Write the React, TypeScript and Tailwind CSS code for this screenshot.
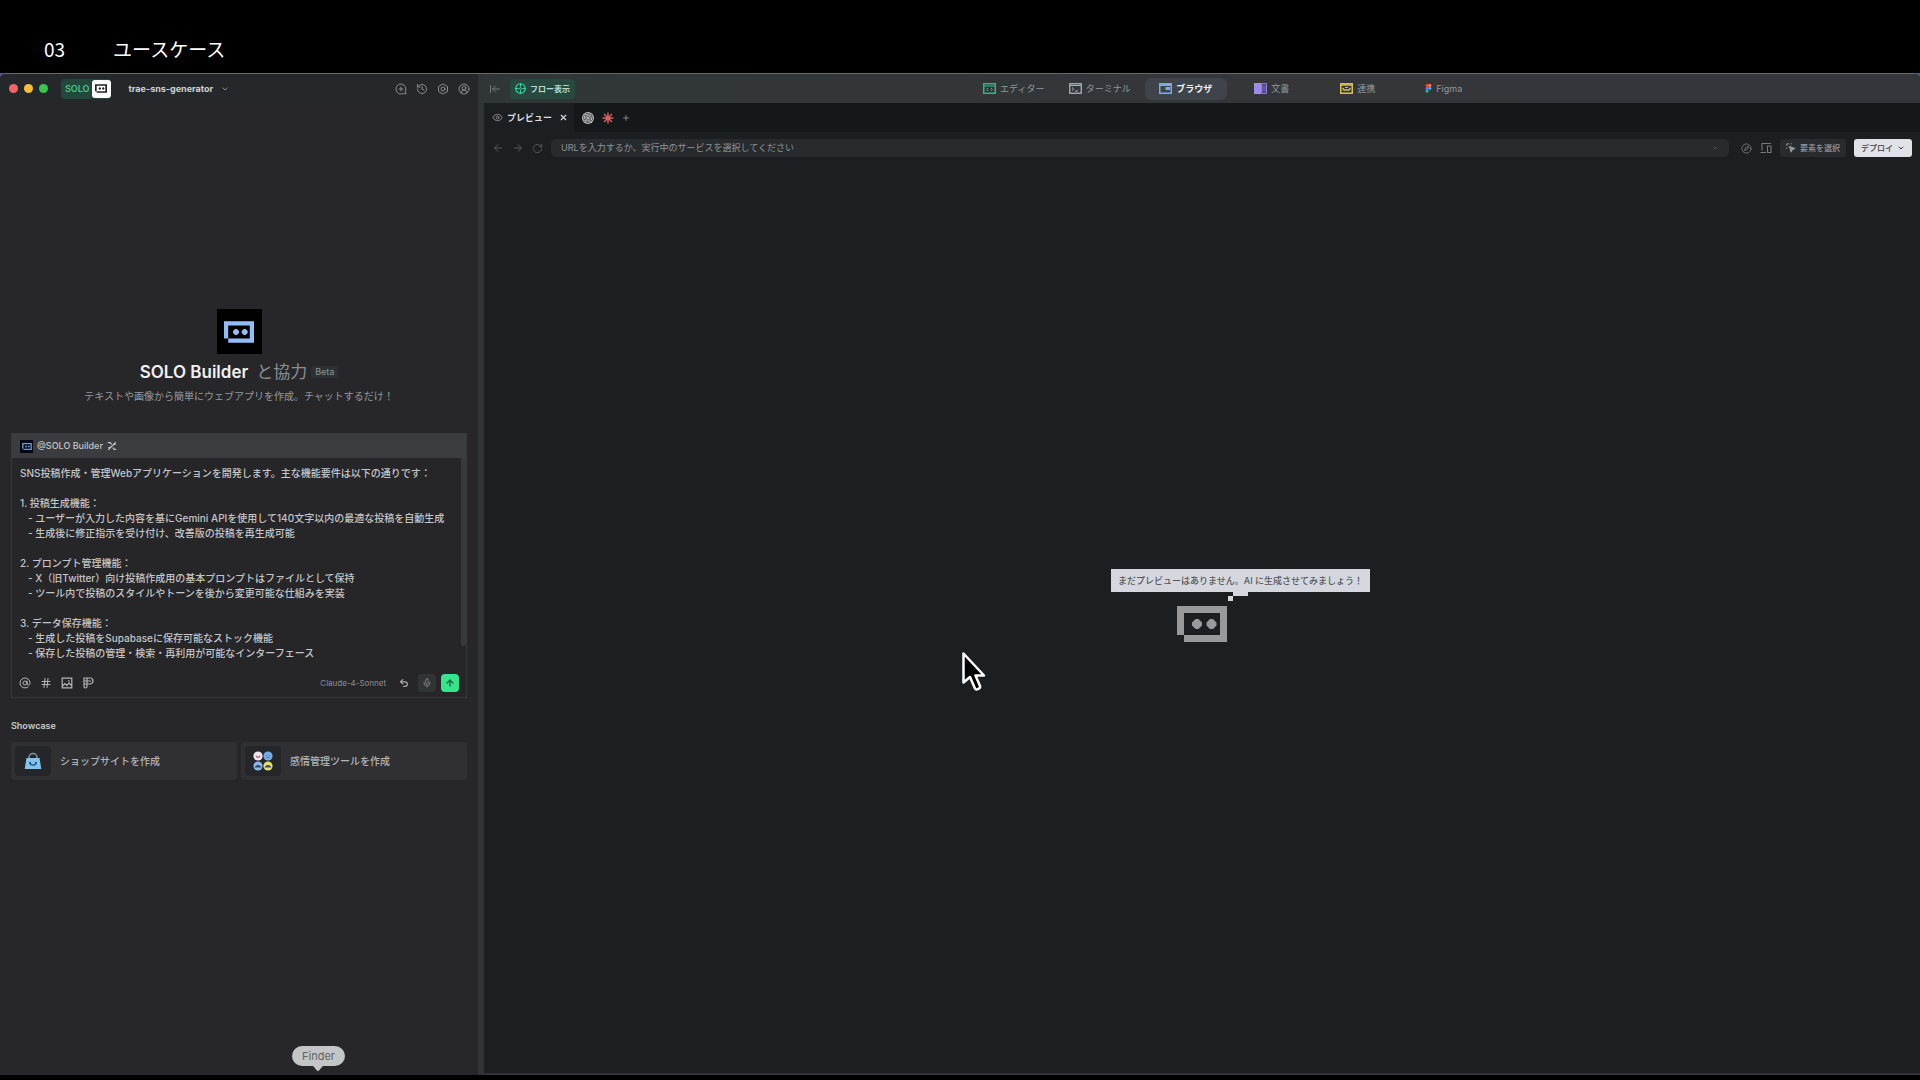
import { useState, type ReactNode } from "react";
import {
  ArrowLeft,
  ArrowLeftToLine,
  ArrowRight,
  ArrowUp,
  AtSign,
  Bolt,
  ChevronDown,
  CircleUserRound,
  Compass,
  Eye,
  Hash,
  History,
  MessageCirclePlus,
  Mic,
  Plus,
  RotateCw,
  Undo2,
  X,
} from "lucide-react";
import { SiOpenai } from "react-icons/si";

const initialPrompt = `SNS投稿作成・管理Webアプリケーションを開発します。主な機能要件は以下の通りです：

1. 投稿生成機能：
   - ユーザーが入力した内容を基にGemini APIを使用して140文字以内の最適な投稿を自動生成
   - 生成後に修正指示を受け付け、改善版の投稿を再生成可能

2. プロンプト管理機能：
   - X（旧Twitter）向け投稿作成用の基本プロンプトはファイルとして保持
   - ツール内で投稿のスタイルやトーンを後から変更可能な仕組みを実装

3. データ保存機能：
   - 生成した投稿をSupabaseに保存可能なストック機能
   - 保存した投稿の管理・検索・再利用が可能なインターフェース`;

// Pixel-style robot face used for the brand mark and the empty state
function RobotMark({ className }: { className?: string }) {
  return (
    <svg viewBox="0 0 50 36" className={className} fill="currentColor" aria-hidden="true">
      <path fillRule="evenodd" d="M0 0H50V36H7V29H0ZM7 7V29H43V7Z" />
      <path d="M18.500 13h3l3.500 3.500v3L21.500 23h-3L15 19.500v-3zM33 13h3l3.500 3.500v3L36 23h-3l-3.500-3.500v-3z" />
    </svg>
  );
}

function EditorIcon() {
  return (
    <svg viewBox="0 0 13 11" className="h-[11px] w-[13px] text-[#2fbf8f]" fill="none" stroke="currentColor" aria-hidden="true">
      <rect x="0.750" y="0.750" width="11.500" height="9.500" strokeWidth="1.400" />
      <path d="M1 3h11" strokeWidth="1.200" />
      <path d="M5 5L3.800 6.500 5 8M8 5l1.200 1.500L8 8" />
    </svg>
  );
}

function TerminalIcon() {
  return (
    <svg viewBox="0 0 13 11" className="h-[11px] w-[13px] text-[#a9b3ba]" fill="none" stroke="currentColor" aria-hidden="true">
      <rect x="0.750" y="0.750" width="11.500" height="9.500" strokeWidth="1.300" />
      <path d="M1 2.500h11M3 4.500l1.700 1.500L3 7.500M6 8h3" />
    </svg>
  );
}

function BrowserIcon() {
  return (
    <svg viewBox="0 0 13 11" className="h-[11px] w-[13px] text-[#7fa8e8]" fill="none" stroke="currentColor" aria-hidden="true">
      <rect x="0.750" y="0.750" width="11.500" height="9.500" strokeWidth="1.500" />
      <path d="M1 2h11" strokeWidth="2" />
      <path d="M6.500 4h4.500v3H6.500z" fill="currentColor" stroke="none" />
    </svg>
  );
}

function DocIcon() {
  return (
    <svg viewBox="0 0 13 11" className="h-[11px] w-[13px]" aria-hidden="true">
      <path d="M0 0h7v11H0z" fill="#9d8be6" />
      <path d="M7.500 0.500h5v10h-5z" fill="#4c4580" stroke="#8d7dd6" />
      <path d="M9 2.500v6M11 2.500v6" stroke="#7a6dc0" />
    </svg>
  );
}

function IntegrationIcon() {
  return (
    <svg viewBox="0 0 13 11" className="h-[11px] w-[13px] text-[#d4c350]" fill="none" stroke="currentColor" aria-hidden="true">
      <rect x="0.750" y="0.750" width="11.500" height="9.500" strokeWidth="1.500" />
      <path d="M1 2h11" strokeWidth="1.500" />
      <path d="M2.500 5l1.500 2h5l1.500-2" strokeWidth="1.400" />
      <path d="M5 4.500h3" />
    </svg>
  );
}

function FigmaIcon() {
  return (
    <svg viewBox="0 0 8 11" className="h-[9px] w-[7px]" aria-hidden="true">
      <path d="M4 0H2.200a1.800 1.800 0 000 3.600H4z" fill="#f24e1e" />
      <path d="M4 0h1.800a1.800 1.800 0 010 3.600H4z" fill="#ff7262" />
      <path d="M4 3.600H2.200a1.800 1.800 0 000 3.600H4z" fill="#a259ff" />
      <circle cx="5.800" cy="5.400" r="1.800" fill="#1abcfe" />
      <path d="M4 7.200H2.200A1.800 1.800 0 104 9z" fill="#0acf83" />
    </svg>
  );
}

function FigmaOutlineIcon() {
  return (
    <svg viewBox="0 0 12 12" className="size-3" fill="none" stroke="currentColor" strokeWidth="1.200" aria-hidden="true">
      <path d="M2 1h6a2 2 0 010 6H2zM2 4h7M5 1v8.500a1.500 1.500 0 01-3 0V7" />
    </svg>
  );
}

function PictureIcon() {
  return (
    <svg viewBox="0 0 12 12" className="size-3" fill="none" stroke="currentColor" strokeWidth="1.200" aria-hidden="true">
      <path d="M1.200 1.200h9.600v9.600H1.200zM1.500 9l2.500-2.500 2 2 2-2.500 2.500 2.500M7 3.800h1.500" />
    </svg>
  );
}

function DevicesIcon() {
  return (
    <svg viewBox="0 0 12 12" className="size-3" fill="none" stroke="currentColor" strokeWidth="1.100" aria-hidden="true">
      <path d="M2 8.500V1.500h9M0.500 10.500H6M7.500 4h3.500v6.500H7.500z" />
    </svg>
  );
}

function PickIcon() {
  return (
    <svg viewBox="0 0 12 12" className="size-[10px]" fill="none" stroke="currentColor" strokeWidth="1.200" aria-hidden="true">
      <path d="M1 3.500V1h2.500M5.500 1H7M1 5.500V7" />
      <path d="M4 4l2.200 7 1.400-3 3.400-1.400z" fill="currentColor" />
    </svg>
  );
}

function ToolsIcon() {
  return (
    <svg viewBox="0 0 12 12" className="size-[10px]" fill="none" stroke="currentColor" strokeWidth="1.400" aria-hidden="true">
      <path d="M1.500 10.500l9-9M1 2h3l1.500 2M7 8l1.500 2H11" />
      <path d="M8.500 4.500l2-1M1.500 8.500l2-1" />
    </svg>
  );
}

function FlowIcon() {
  return (
    <svg viewBox="0 0 12 12" className="size-[11px] text-[#3ad6a0]" fill="none" stroke="currentColor" aria-hidden="true">
      <circle cx="6" cy="6" r="5.200" strokeWidth="1.200" />
      <path d="M6 0v4M6 8v4M0 6h4M8 6h4" strokeWidth="1.200" />
      <circle cx="6" cy="6" r="1" />
    </svg>
  );
}

function BurstIcon() {
  return (
    <svg viewBox="0 0 12 12" className="size-3 text-[#d4605c]" stroke="currentColor" strokeWidth="1.400" aria-hidden="true">
      <path d="M6 0.500v11M0.500 6h11M2 2l8 8M10 2l-8 8" />
      <circle cx="6" cy="6" r="2.600" fill="currentColor" stroke="none" />
    </svg>
  );
}

function BagIcon() {
  return (
    <svg viewBox="0 0 18 18" className="size-[18px]" aria-hidden="true">
      <path d="M5 8V5.500a4 4 0 018 0V8" fill="none" stroke="#7d98a8" strokeWidth="1.500" />
      <path d="M2.500 6h13l1.800 11H0.700z" fill="#83c3ee" />
      <path d="M6 10.500c0 3.500 6 3.500 6 0" fill="none" stroke="#1c4a78" strokeWidth="1.300" />
      <path d="M5 10.500h2M11 10.500h2" stroke="#1c4a78" />
    </svg>
  );
}

function MoodIcon() {
  return (
    <svg viewBox="0 0 20 20" className="size-5" aria-hidden="true">
      <circle cx="5" cy="5" r="4.600" fill="#f0e9f0" />
      <circle cx="15" cy="5" r="4.600" fill="#79a9ea" />
      <circle cx="5" cy="15" r="4.600" fill="#8ab6f0" />
      <circle cx="15" cy="15" r="4.600" fill="#e6e06a" />
      <g fill="none" stroke="#35456b" strokeWidth="1.100">
        <path d="M3 4.500c.5 2.500 3.500 2.500 4 0" stroke="#a04a5c" />
        <path d="M13 4.500h1M16 4.500h1M13.500 6.500h3" stroke="#4c78b8" />
        <path d="M2.500 16c1-2 4-2 5 0z" fill="#27406f" />
        <path d="M12.500 16c1-2 4-2 5 0z" fill="#5c5a24" />
      </g>
    </svg>
  );
}

const tabs: { label: string; icon: ReactNode }[] = [
  { label: "エディター", icon: <EditorIcon /> },
  { label: "ターミナル", icon: <TerminalIcon /> },
  { label: "ブラウザ", icon: <BrowserIcon /> },
  { label: "文書", icon: <DocIcon /> },
  { label: "連携", icon: <IntegrationIcon /> },
  { label: "Figma", icon: <FigmaIcon /> },
];

const showcases = [
  { label: "ショップサイトを作成", icon: <BagIcon /> },
  { label: "感情管理ツールを作成", icon: <MoodIcon /> },
];

function IconButton({ label, children }: { label: string; children: ReactNode }) {
  return (
    <button type="button" aria-label={label} className="flex shrink-0 items-center justify-center">
      {children}
    </button>
  );
}

function TitleBar() {
  return (
    <header className="flex h-[29px] items-center bg-[#25282a] px-2 text-[#8b8e91]">
      <div className="flex gap-[6px] pl-px">
        <span className="size-[9px] rounded-full bg-[#f4636a]" />
        <span className="size-[9px] rounded-full bg-[#f6bd3b]" />
        <span className="size-[9px] rounded-full bg-[#36c84b]" />
      </div>
      <button type="button" aria-label="SOLO" className="ml-[13px] flex h-5 items-center rounded-sm bg-[#23483b] pl-1 text-[9px] font-semibold text-[#4cc489]">
        SOLO
        <span className="ml-[2px] flex h-[18px] w-[19px] items-center justify-center rounded-[3px] bg-white text-[#202224]">
          <RobotMark className="h-[9px] w-3" />
        </span>
      </button>
      <button type="button" className="ml-[18px] flex items-center gap-2 text-[9px] font-bold text-[#cfd1d2]">
        trae-sns-generator
        <ChevronDown className="size-2 text-[#8b8e91]" strokeWidth={3} />
      </button>
      <div className="ml-auto flex items-center gap-[9px]">
        <IconButton label="New chat"><MessageCirclePlus className="size-3 -scale-x-100" /></IconButton>
        <IconButton label="History"><History className="size-3" /></IconButton>
        <IconButton label="Settings"><Bolt className="size-3" /></IconButton>
        <IconButton label="Account"><CircleUserRound className="size-3" /></IconButton>
      </div>
    </header>
  );
}

function PromptCard() {
  const [prompt, setPrompt] = useState(initialPrompt);

  return (
    <div className="border border-[#38393c] bg-[#262629] text-[#c4c5c7]">
      <div className="flex h-6 items-center gap-1 bg-[#3a3c3f] px-2 text-[9px] font-medium">
        <span className="flex size-[13px] items-center justify-center bg-[#04060d] text-[#6f97cc]">
          <RobotMark className="h-[7px] w-[10px]" />
        </span>
        @SOLO Builder
        <ToolsIcon />
      </div>
      <div className="flex">
        <textarea
          aria-label="Prompt"
          rows={13}
          value={prompt}
          onChange={(e) => setPrompt(e.target.value)}
          className="mt-2 block min-w-0 flex-1 resize-none overflow-hidden pl-2 text-[10px] leading-[15px] font-medium outline-none"
        />
        <div className="h-[188px] w-[5px] rounded-b bg-[#38393c]" />
      </div>
      <div className="flex h-9 items-center gap-[9px] px-[7px] pt-2 text-[#b4b5b7]">
        <IconButton label="Mention"><AtSign className="size-3" /></IconButton>
        <IconButton label="Context"><Hash className="size-3" /></IconButton>
        <IconButton label="Image"><PictureIcon /></IconButton>
        <IconButton label="Figma"><FigmaOutlineIcon /></IconButton>
        <button type="button" className="ml-auto text-[8px] text-[#8d8e91]">Claude-4-Sonnet</button>
        <IconButton label="Undo"><Undo2 className="ml-1 size-[10px] text-[#a5a7a9]" strokeWidth={3} /></IconButton>
        <IconButton label="Voice">
          <span className="flex size-[18px] items-center justify-center rounded-sm bg-[#323335]">
            <Mic className="size-[10px] text-[#85878a]" />
          </span>
        </IconButton>
        <button type="button" aria-label="Send" className="-ml-1 flex size-[18px] items-center justify-center rounded-sm bg-[#36e58b] text-[#12613a]">
          <ArrowUp className="size-[10px]" strokeWidth={3} />
        </button>
      </div>
    </div>
  );
}

function ChatPanel() {
  return (
    <aside className="relative flex w-[24.9%] min-w-[400px] flex-col bg-[#27272a]">
      <TitleBar />
      <div className="flex-1 px-[11px] pt-[206px]">
        <div className="flex flex-col items-center pb-[29px]">
          <div className="flex h-[45px] w-[45px] items-center justify-center bg-black text-[#94bdf7]">
            <RobotMark className="h-[22px] w-[30px]" />
          </div>
          <h1 className="mt-[6px] flex items-center text-[17px] leading-6 font-semibold text-[#f0f0f1]">
            SOLO Builder
            <span className="ml-2 font-normal text-[#8d8e91]">と協力</span>
            <span className="ml-1 rounded-sm bg-[#2c3234] px-1 text-[9px] leading-3 font-normal text-[#8d9295]">Beta</span>
          </h1>
          <p className="mt-1 text-[10px] leading-4 text-[#97989b]">
            テキストや画像から簡単にウェブアプリを作成。チャットするだけ！
          </p>
        </div>
        <PromptCard />
        <h2 className="mt-5 text-[9px] leading-4 font-semibold text-[#c9cacb]">Showcase</h2>
        <div className="mt-2 grid grid-cols-2 gap-1">
          {showcases.map((item) => (
            <button
              key={item.label}
              type="button"
              className="flex h-[38px] items-center rounded-sm bg-[#303033] p-1 text-[10px] font-medium text-[#b3b4b6]"
            >
              <span className="mr-[9px] flex h-full w-9 items-center justify-center rounded-sm bg-[#252629]">{item.icon}</span>
              {item.label}
            </button>
          ))}
        </div>
      </div>
      <div role="tooltip" className="absolute bottom-1 left-[292px] flex flex-col items-center">
        <span className="rounded-full bg-[#c4c5c6] px-[10px] text-[11px] leading-5 text-[#626365]">Finder</span>
        <svg viewBox="0 0 14 6" className="-mt-px h-[6px] w-[14px] fill-[#c4c5c6]" aria-hidden="true">
          <path d="M0 0h14c-3 0-5 6-7 6S3 0 0 0z" />
        </svg>
      </div>
    </aside>
  );
}

function WorkspaceBar() {
  const [active, setActive] = useState("ブラウザ");

  return (
    <nav className="flex h-[29px] items-center bg-gradient-to-r from-[#303637] via-[#34363a] to-[#34363c] text-[9px]">
      <div className="flex flex-[10] items-center gap-[9px] pl-[5px]">
        <IconButton label="Collapse"><ArrowLeftToLine className="size-3 text-[#74797b]" /></IconButton>
        <button type="button" className="flex h-5 items-center gap-1 rounded-sm bg-[#27493f] px-[5px] text-[8px] font-semibold text-[#b9dccd]">
          <FlowIcon />
          フロー表示
        </button>
      </div>
      <div className="flex gap-1">
        {tabs.map((tab) => (
          <button
            key={tab.label}
            type="button"
            onClick={() => setActive(tab.label)}
            className={`flex h-[22px] w-[82px] items-center justify-center gap-1 rounded-md ${
              tab.label === active ? "bg-[#3f444a] font-bold text-[#f0f1f3]" : "text-[#95989b]"
            }`}
          >
            {tab.icon}
            {tab.label}
          </button>
        ))}
      </div>
      <div className="flex-[9]" />
    </nav>
  );
}

function BrowserToolbar() {
  return (
    <div className="flex h-8 items-center px-2 text-[#75797c]">
      <div className="flex gap-2 text-[#575b5e]">
        <IconButton label="Back"><ArrowLeft className="size-3" /></IconButton>
        <IconButton label="Forward"><ArrowRight className="size-3" /></IconButton>
        <IconButton label="Reload"><RotateCw className="size-[11px]" /></IconButton>
      </div>
      <div className="ml-2 flex h-[18px] flex-1 items-center rounded-md bg-[#282b2d] px-[10px]">
        <input
          aria-label="URL"
          placeholder="URLを入力するか、実行中のサービスを選択してください"
          className="min-w-0 flex-1 text-[9px] outline-none placeholder:text-[#909396]"
        />
        <ChevronDown className="size-2 text-[#5b5f61]" />
      </div>
      <div className="ml-3 flex items-center gap-2">
        <IconButton label="Inspect"><Compass className="size-[11px]" /></IconButton>
        <IconButton label="Devices"><DevicesIcon /></IconButton>
        <button type="button" className="flex h-[18px] items-center gap-1 rounded-[3px] bg-[#292c2e] px-[6px] text-[8px] font-medium text-[#94989a]">
          <PickIcon />
          要素を選択
        </button>
        <button type="button" className="flex h-[18px] items-center gap-1 rounded-[3px] bg-[#dfe2e7] px-[7px] text-[8px] font-medium text-[#3b3e42]">
          デプロイ
          <ChevronDown className="size-2" strokeWidth={3} />
        </button>
      </div>
    </div>
  );
}

function Workspace() {
  return (
    <main className="relative flex min-w-0 flex-1 flex-col border-b-2 border-[#303437] bg-[#1b1f22]">
      <WorkspaceBar />
      <div className="flex h-[29px] items-stretch bg-[#14181b]">
        <div className="flex items-center gap-1 bg-[#1b1f22] pr-[6px] pl-2 text-[9px] font-bold text-[#dcdee0]">
          <Eye className="size-[11px] text-[#8a8e90]" />
          プレビュー
          <IconButton label="Close tab"><X className="ml-[3px] size-[9px]" strokeWidth={3} /></IconButton>
        </div>
        <div className="flex items-center gap-2 pl-2">
          <IconButton label="ChatGPT">
            <span className="flex size-3 items-center justify-center rounded-full bg-[#b9bcbd]">
              <SiOpenai className="size-[10px] text-[#404447]" />
            </span>
          </IconButton>
          <IconButton label="Claude"><BurstIcon /></IconButton>
          <IconButton label="New tab"><Plus className="size-2 text-[#85898b]" strokeWidth={3} /></IconButton>
        </div>
      </div>
      <BrowserToolbar />
      <div className="flex flex-1 items-center justify-center pt-[10px]">
        <div className="relative">
          <RobotMark className="h-9 w-[50px] text-[#97999b]" />
          {/* Speech bubble with its stepped tail */}
          <div className="absolute bottom-[5px] left-[-66px] mb-9">
            <p className="bg-[#d5d7de] px-[7px] text-[9px] leading-[23px] font-medium whitespace-nowrap text-[#54575c]">
              まだプレビューはありません。AI に生成させてみましょう！
            </p>
            <span className="ml-[122px] block h-1 w-[15px] bg-[#d5d7de]" />
            <span className="ml-[117px] block size-[5px] bg-[#d5d7de]" />
          </div>
        </div>
      </div>
      <svg
        viewBox="0 0 24 40"
        className="absolute top-[578px] left-[478px] h-10 w-6"
        fill="#000"
        stroke="#fff"
        strokeWidth="2.500"
        strokeLinejoin="round"
        aria-hidden="true"
      >
        <path d="M1.500 1.500V30.500L8 25l5 11.500c1 2 6 0 5-2.500L13.500 23.500H22z" />
      </svg>
    </main>
  );
}

export default function App() {
  return (
    <div className="flex min-h-screen flex-col bg-black pb-[5px] font-[Inter,'Noto_Sans_CJK_JP',sans-serif]">
      <div className="flex h-[73px] items-center gap-12 px-11 pt-[26px] font-['Noto_Sans_CJK_JP',sans-serif] text-[19px] text-white">
        <span>03</span>
        <span>ユースケース</span>
      </div>
      <div className="flex flex-1 bg-[#4b5190]">
        <div className="flex flex-1 overflow-hidden rounded-t-md border-t border-[#666a6b] bg-[#303437]">
          <ChatPanel />
          <div className="w-[6px] bg-[#303437]" />
          <Workspace />
        </div>
      </div>
    </div>
  );
}
